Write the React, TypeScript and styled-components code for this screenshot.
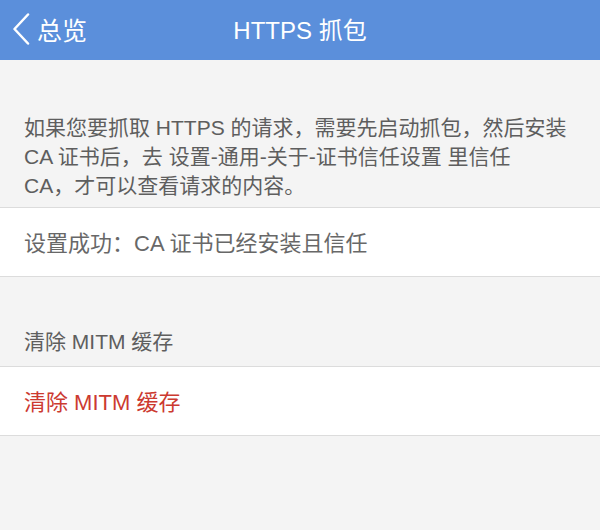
import styled, { createGlobalStyle } from 'styled-components'

const GlobalStyle = createGlobalStyle`
  html, body {
    margin: 0;
    padding: 0;
    background-color: #f4f4f4;
  }
  body {
    font-family: "Liberation Sans", "Noto Sans CJK SC", sans-serif;
    -webkit-font-smoothing: antialiased;
  }
`

const Page = styled.div`
  width: 600px;
  height: 530px;
  background-color: #f4f4f4;
  overflow: hidden;
`

const NavBar = styled.header`
  height: 60px;
  background-color: #5b8fdb;
  color: #ffffff;
  display: grid;
  grid-template-columns: 1fr auto 1fr;
  align-items: center;
  padding-bottom: 3px;
  box-sizing: border-box;
`

const BackButton = styled.div`
  display: flex;
  align-items: center;
  gap: 7px;
  padding-left: 12px;
  font-size: 25px;
`

const Title = styled.h1`
  margin: 0;
  font-size: 24px;
  font-weight: 400;
`

const Intro = styled.p`
  margin: 0;
  padding: 53px 24px 7px;
  font-size: 21px;
  line-height: 29px;
  color: #5e5e5e;
`

const SectionTitle = styled.div`
  padding: 52px 24px 12px;
  font-size: 21px;
  line-height: 25px;
  color: #5e5e5e;
`

const Cell = styled.div<{ $danger?: boolean }>`
  height: 68px;
  display: flex;
  align-items: center;
  padding: 0 24px 3px;
  box-sizing: border-box;
  height: 70px;
  background-color: #ffffff;
  border-top: 1px solid #dcdcdc;
  border-bottom: 1px solid #dcdcdc;
  font-size: 22px;
  color: ${(p) => (p.$danger ? '#cc3a30' : '#686868')};
`

const App = () => {
  return (
    <Page>
      <GlobalStyle />
      <NavBar>
        <BackButton>
          <svg width="18" height="32" viewBox="0 0 18 32">
            <polyline
              points="16,1.5 2.5,16 16,30.5"
              fill="none"
              stroke="#ffffff"
              strokeWidth="2.5"
              strokeLinecap="round"
              strokeLinejoin="round"
            />
          </svg>
          总览
        </BackButton>
        <Title>HTTPS 抓包</Title>
        <div />
      </NavBar>
      <Intro>
        如果您要抓取 HTTPS 的请求，需要先启动抓包，然后安装
        <br />
        CA 证书后，去 设置-通用-关于-证书信任设置 里信任
        <br />
        CA，才可以查看请求的内容。
      </Intro>
      <Cell>设置成功：CA 证书已经安装且信任</Cell>
      <SectionTitle>清除 MITM 缓存</SectionTitle>
      <Cell $danger>清除 MITM 缓存</Cell>
    </Page>
  )
}

export default App
